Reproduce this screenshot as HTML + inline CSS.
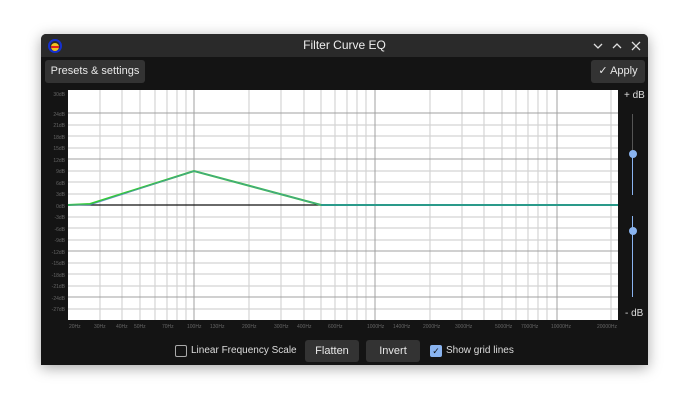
<!DOCTYPE html><html><head><style>
body{margin:0;width:690px;height:415px;background:#fff;position:relative;overflow:hidden;font-family:"Liberation Sans",sans-serif;}
.win{position:absolute;left:41px;top:34px;width:607px;height:331px;background:#141414;border-radius:5px 5px 0 0;box-shadow:0 3px 14px rgba(0,0,0,.35);overflow:hidden}
.tb{position:absolute;left:0;top:0;width:607px;height:23px;background:#2a2a2a;color:#eee;font-size:12px;text-align:center;line-height:23px}
.btn{position:absolute;background:#333;border-radius:3px;color:#e8e8e8;font-size:11px;text-align:center}
.lbl{position:absolute;color:#ddd;font-size:10px;white-space:nowrap}
.cb{position:absolute;width:10px;height:10px;border:1px solid #aaa;border-radius:2px}
</style></head><body>
<div class="win">
<div class="tb">Filter Curve EQ</div>
<svg style="position:absolute;left:7px;top:5px" width="14" height="14"><circle cx="7" cy="7" r="6" fill="none" stroke="#1530d0" stroke-width="2"/><circle cx="7" cy="8" r="4" fill="#f0c020"/><rect x="3" y="7" width="8" height="2" fill="#e02020"/></svg>
<svg style="position:absolute;left:550px;top:6px" width="52" height="12" stroke="#ddd" stroke-width="1.3" fill="none"><path d="M3 4l4 4 4-4"/><path d="M22 8l4-4 4 4"/><path d="M41 2l8 8M49 2l-8 8"/></svg>
<div class="btn" style="left:4px;top:26px;width:100px;height:23px;line-height:23px">Presets &amp; settings</div>
<div class="btn" style="left:550px;top:26px;width:54px;height:23px;line-height:23px">✓ Apply</div>
<svg style="position:absolute;left:0;top:50px" width="607" height="250" font-size="5" fill="#666">
<rect x="27" y="6" width="550" height="230" fill="#fff"/>
<g stroke="#d4d4d4" stroke-width="1.2">
<line x1="59" y1="6" x2="59" y2="236"/><line x1="81" y1="6" x2="81" y2="236"/><line x1="99" y1="6" x2="99" y2="236"/><line x1="114" y1="6" x2="114" y2="236"/><line x1="126" y1="6" x2="126" y2="236"/><line x1="136" y1="6" x2="136" y2="236"/><line x1="145" y1="6" x2="145" y2="236"/>
<line x1="208" y1="6" x2="208" y2="236"/><line x1="240" y1="6" x2="240" y2="236"/><line x1="263" y1="6" x2="263" y2="236"/><line x1="280" y1="6" x2="280" y2="236"/><line x1="294" y1="6" x2="294" y2="236"/><line x1="306" y1="6" x2="306" y2="236"/><line x1="316" y1="6" x2="316" y2="236"/><line x1="325" y1="6" x2="325" y2="236"/>
<line x1="389" y1="6" x2="389" y2="236"/><line x1="421" y1="6" x2="421" y2="236"/><line x1="443" y1="6" x2="443" y2="236"/><line x1="461" y1="6" x2="461" y2="236"/><line x1="475" y1="6" x2="475" y2="236"/><line x1="487" y1="6" x2="487" y2="236"/><line x1="497" y1="6" x2="497" y2="236"/><line x1="506" y1="6" x2="506" y2="236"/><line x1="570" y1="6" x2="570" y2="236"/>
<line x1="27" y1="41" x2="577" y2="41"/><line x1="27" y1="52" x2="577" y2="52"/><line x1="27" y1="64" x2="577" y2="64"/><line x1="27" y1="87" x2="577" y2="87"/><line x1="27" y1="98" x2="577" y2="98"/><line x1="27" y1="110" x2="577" y2="110"/><line x1="27" y1="133" x2="577" y2="133"/><line x1="27" y1="144" x2="577" y2="144"/><line x1="27" y1="156" x2="577" y2="156"/><line x1="27" y1="179" x2="577" y2="179"/><line x1="27" y1="190" x2="577" y2="190"/><line x1="27" y1="202" x2="577" y2="202"/><line x1="27" y1="225" x2="577" y2="225"/>
</g>
<g stroke="#a0a0a0" stroke-width="1">
<line x1="153" y1="6" x2="153" y2="236"/><line x1="334" y1="6" x2="334" y2="236"/><line x1="516" y1="6" x2="516" y2="236"/>
<line x1="27" y1="29" x2="577" y2="29"/><line x1="27" y1="75" x2="577" y2="75"/><line x1="27" y1="167" x2="577" y2="167"/><line x1="27" y1="213" x2="577" y2="213"/>
</g>
<line x1="27" y1="121" x2="577" y2="121" stroke="#111" stroke-width="1.2"/>
<polyline points="27,121 49,120 153,87 280,121 577,121" fill="none" stroke="#3c3" stroke-width="2"/>
<polyline points="27,121 49,121 153,87 280,121 577,121" fill="none" stroke="#5a7ad8" stroke-width="1" opacity=".6"/>
<line x1="280" y1="121" x2="577" y2="121" stroke="#2a9a8a" stroke-width="2"/>
<g text-anchor="end"><text x="24" y="12">30dB</text><text x="24" y="32">24dB</text><text x="24" y="43">21dB</text><text x="24" y="55">18dB</text><text x="24" y="66">15dB</text><text x="24" y="78">12dB</text><text x="24" y="89">9dB</text><text x="24" y="101">6dB</text><text x="24" y="112">3dB</text><text x="24" y="124">0dB</text><text x="24" y="135">-3dB</text><text x="24" y="147">-6dB</text><text x="24" y="158">-9dB</text><text x="24" y="170">-12dB</text><text x="24" y="181">-15dB</text><text x="24" y="193">-18dB</text><text x="24" y="204">-21dB</text><text x="24" y="216">-24dB</text><text x="24" y="227">-27dB</text></g>
<g><text x="28" y="244">20Hz</text><text x="53" y="244">30Hz</text><text x="75" y="244">40Hz</text><text x="93" y="244">50Hz</text><text x="121" y="244">70Hz</text><text x="146" y="244">100Hz</text><text x="169" y="244">130Hz</text><text x="201" y="244">200Hz</text><text x="233" y="244">300Hz</text><text x="256" y="244">400Hz</text><text x="287" y="244">600Hz</text><text x="326" y="244">1000Hz</text><text x="352" y="244">1400Hz</text><text x="382" y="244">2000Hz</text><text x="414" y="244">3000Hz</text><text x="454" y="244">5000Hz</text><text x="480" y="244">7000Hz</text><text x="510" y="244">10000Hz</text><text x="556" y="244">20000Hz</text></g>
</svg>
<div class="lbl" style="left:583px;top:56px">+ dB</div>
<div class="lbl" style="left:584px;top:274px">- dB</div>
<div style="position:absolute;left:591px;top:80px;width:1px;height:81px;background:#555"></div>
<div style="position:absolute;left:591px;top:120px;width:1px;height:41px;background:#8ab4f0"></div>
<div style="position:absolute;left:588px;top:116px;width:8px;height:8px;border-radius:50%;background:#8ab4f0"></div>
<div style="position:absolute;left:591px;top:182px;width:1px;height:81px;background:#8ab4f0"></div>
<div style="position:absolute;left:588px;top:193px;width:8px;height:8px;border-radius:50%;background:#8ab4f0"></div>
<div class="cb" style="left:134px;top:311px"></div>
<div class="lbl" style="left:150px;top:311px">Linear Frequency Scale</div>
<div class="btn" style="left:264px;top:306px;width:54px;height:22px;line-height:22px">Flatten</div>
<div class="btn" style="left:325px;top:306px;width:54px;height:22px;line-height:22px">Invert</div>
<div class="cb" style="left:389px;top:311px;background:#8ab4f0;border-color:#8ab4f0;color:#111;font-size:9px;line-height:10px;text-align:center">✓</div>
<div class="lbl" style="left:405px;top:311px">Show grid lines</div>
</div>
</body></html>
